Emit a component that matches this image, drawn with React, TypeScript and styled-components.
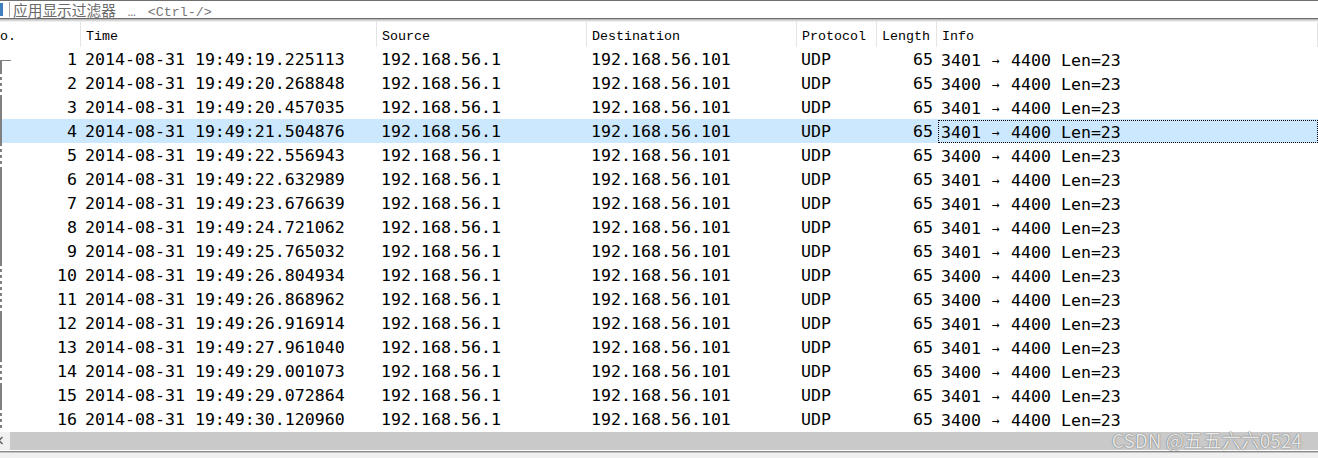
import React from "react";
import styled, { createGlobalStyle, css } from "styled-components";

const GlobalStyle = createGlobalStyle`
  html, body { margin: 0; padding: 0; background: #ffffff; }
  body { font-family: "Liberation Mono", "DejaVu Sans Mono", monospace; }
`;

const COLS = "94px 296px 210px 210px 80px 60px 1fr";
const LINE = "#808080";

const Window = styled.div`
  position: relative;
  width: 1318px;
  height: 458px;
  overflow: hidden;
  display: flex;
  flex-direction: column;
  background: #ffffff;
`;

const FilterBar = styled.div`
  height: 17px;
  border-top: 1px solid #6f6f6f;
  display: flex;
  align-items: center;
  line-height: 17px;
`;

const BookmarkStub = styled.div`
  width: 3px;
  height: 13px;
  background: #3f7fc0;
  flex: none;
`;

const FilterDivider = styled.div`
  width: 1px;
  height: 15px;
  margin-left: 6px;
  background: #a8a8a8;
  flex: none;
`;

const FilterPlaceholder = styled.div`
  margin-left: 3px;
  height: 17px;
  line-height: 17px;
  font-family: "Liberation Mono", monospace;
  font-size: 13.33px;
  color: #767676;
  white-space: pre;
`;

const CjkText = styled.span`
  font-family: "Noto Sans CJK SC", sans-serif;
  font-size: 14.7px;
  line-height: 17px;
  color: #6a6a6a;
`;

const Ellipsis = styled.span`
  display: inline-block;
  width: 16px;
  text-align: center;
`;

const FilterRule = styled.div`
  height: 3px;
  border-top: 1px solid #6b6b6b;
  background: linear-gradient(to bottom, #bcbcbc 0 1px, #d8d8d8 1px 2px, #efefef 2px 3px);
  flex: none;
`;

const Viewport = styled.div`
  overflow: hidden;
  flex: none;
`;

const Sheet = styled.div`
  margin-left: -13px;
  width: calc(100% + 13px);
`;

const HeaderRow = styled.div`
  display: grid;
  grid-template-columns: ${COLS};
  height: 25px;
`;

const HeaderCell = styled.div`
  box-sizing: border-box;
  border-right: 1px solid #e4e4e4;
  padding: 5px 0 0 5px;
  font-size: 13.33px;
  line-height: 20px;
  color: #000;
  white-space: nowrap;
  overflow: hidden;
`;

const Row = styled.div<{ $selected?: boolean }>`
  display: grid;
  grid-template-columns: ${COLS};
  height: 24px;
  background: ${({ $selected }) => ($selected ? "#cce8ff" : "transparent")};
  font-family: "DejaVu Sans Mono", monospace;
  font-size: 16.6px;
  line-height: 26px;
  color: #000;
`;

const Cell = styled.div<{ $right?: boolean }>`
  box-sizing: border-box;
  padding: ${({ $right }) => ($right ? "0 4px 0 0" : "0 0 0 4px")};
  text-align: ${({ $right }) => ($right ? "right" : "left")};
  white-space: nowrap;
  overflow: hidden;
`;

const NoCell = styled.div`
  display: flex;
  align-items: stretch;
  padding-right: 4px;
  overflow: hidden;
`;

type Kind = "first" | "solid" | "dashed";

const Indicator = styled.span<{ $kind: Kind }>`
  flex: none;
  width: 11px;
  margin-left: 13px;
  box-sizing: border-box;
  ${({ $kind }) =>
    $kind === "first"
      ? css`
          margin-top: 13px;
          border-top: 1px solid ${LINE};
          border-left: 2px solid ${LINE};
        `
      : $kind === "solid"
      ? css`
          border-left: 2px solid ${LINE};
        `
      : css`
          background: repeating-linear-gradient(to bottom, ${LINE} 0 3px, transparent 3px 6px) left top / 2px 100% no-repeat;
        `}
`;

const NoText = styled.span`
  flex: 1;
  text-align: right;
`;

const InfoCell = styled.div<{ $focused?: boolean }>`
  box-sizing: border-box;
  margin: 1px 0 0 1px;
  height: 23px;
  line-height: 23px;
  padding-left: 2px;
  border: 1px dotted ${({ $focused }) => ($focused ? "#000" : "transparent")};
  white-space: nowrap;
  overflow: hidden;
`;

const Arrow = styled.span`
  display: inline-block;
  width: 10px;
  text-align: center;
  font-size: 13px;
  line-height: 1;
  vertical-align: 1px;
`;

const Gap = styled.div<{ $h: number; $bg: string }>`
  height: ${({ $h }) => $h}px;
  background: ${({ $bg }) => $bg};
  flex: none;
`;

const HScroll = styled.div`
  height: 18px;
  display: flex;
  flex: none;
`;

const ScrollArrow = styled.div`
  width: 10px;
  background: #f0f0f0;
  overflow: hidden;
  flex: none;
`;

const ScrollThumb = styled.div`
  flex: 1;
  background: #c9c9c9;
`;

const StatusStrip = styled.div`
  flex: 1;
  background: #f0f0f0;
`;

const Watermark = styled.div`
  position: absolute;
  right: 16px;
  top: 428px;
  line-height: 24px;
  font-family: "Noto Sans CJK SC", "Noto Sans", sans-serif;
  font-size: 19px;
  color: rgba(255, 255, 255, 0.85);
  text-shadow: 0 0 1px rgba(90, 90, 90, 0.9), 0 0 1px rgba(90, 90, 90, 0.6);
  white-space: nowrap;
`;

const times = [
  "19:49:19.225113",
  "19:49:20.268848",
  "19:49:20.457035",
  "19:49:21.504876",
  "19:49:22.556943",
  "19:49:22.632989",
  "19:49:23.676639",
  "19:49:24.721062",
  "19:49:25.765032",
  "19:49:26.804934",
  "19:49:26.868962",
  "19:49:26.916914",
  "19:49:27.961040",
  "19:49:29.001073",
  "19:49:29.072864",
  "19:49:30.120960",
];

const ports = [3401, 3400, 3401, 3401, 3400, 3401, 3401, 3401, 3401, 3400, 3400, 3401, 3401, 3400, 3401, 3400];

const packets = times.map((t, i) => ({
  no: i + 1,
  time: `2014-08-31 ${t}`,
  src: "192.168.56.1",
  dst: "192.168.56.101",
  proto: "UDP",
  len: 65,
  srcPort: ports[i],
  kind: (i === 0 ? "first" : ports[i] === 3401 ? "solid" : "dashed") as Kind,
}));

const headers = ["No.", "Time", "Source", "Destination", "Protocol", "Length", "Info"];

export default function App() {
  return (
    <>
      <GlobalStyle />
      <Window>
        <FilterBar>
          <BookmarkStub />
          <FilterDivider />
          <FilterPlaceholder>
            <CjkText>应用显示过滤器</CjkText>
            {" "}
            <Ellipsis>…</Ellipsis>
            {" <Ctrl-/>"}
          </FilterPlaceholder>
        </FilterBar>
        <FilterRule />
        <Viewport>
          <Sheet>
            <HeaderRow>
              {headers.map((h) => (
                <HeaderCell key={h}>{h}</HeaderCell>
              ))}
            </HeaderRow>
            {packets.map((p) => (
              <Row key={p.no} $selected={p.no === 4}>
                <NoCell>
                  <Indicator $kind={p.kind} />
                  <NoText>{p.no}</NoText>
                </NoCell>
                <Cell>{p.time}</Cell>
                <Cell>{p.src}</Cell>
                <Cell>{p.dst}</Cell>
                <Cell>{p.proto}</Cell>
                <Cell $right>{p.len}</Cell>
                <InfoCell $focused={p.no === 4}>
                  {p.srcPort} <Arrow>→</Arrow> 4400 Len=23
                </InfoCell>
              </Row>
            ))}
          </Sheet>
        </Viewport>
        <Gap $h={1} $bg="#ffffff" />
        <HScroll>
          <ScrollArrow>
            <svg width="10" height="18" viewBox="0 0 10 18">
              <polyline points="2.5,5 -1,8.5 2.5,12" fill="none" stroke="#5a5a5a" strokeWidth="1.4" />
            </svg>
          </ScrollArrow>
          <ScrollThumb />
        </HScroll>
        <Gap $h={1} $bg="#ffffff" />
        <Gap $h={1} $bg="#8a8a8a" />
        <Gap $h={1} $bg="#c4c4c4" />
        <StatusStrip />
        <Watermark>CSDN @五五六六0524</Watermark>
      </Window>
    </>
  );
}
